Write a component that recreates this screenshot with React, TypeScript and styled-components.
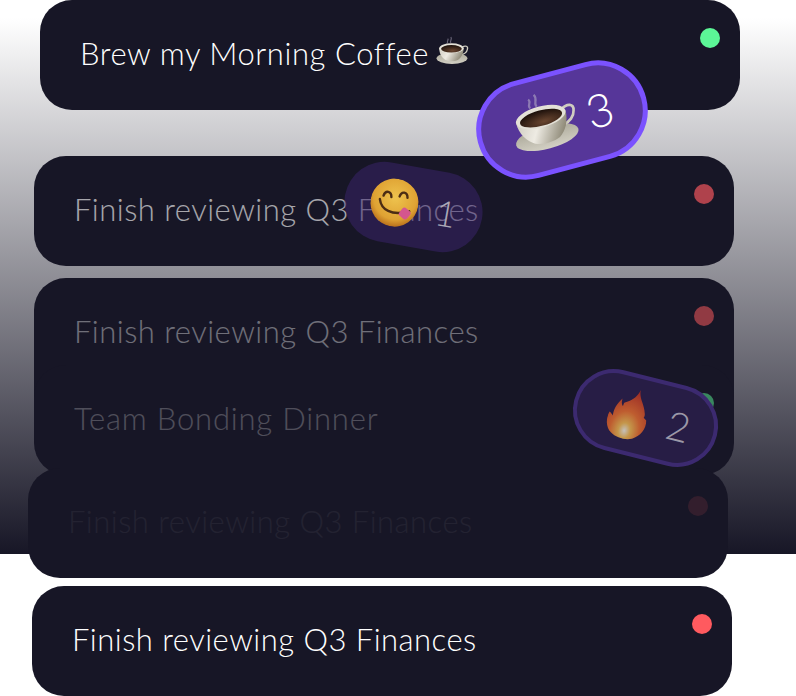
import React from "react";
import styled, { createGlobalStyle } from "styled-components";

const GlobalStyle = createGlobalStyle`
  html, body {
    margin: 0;
    padding: 0;
    background: #fff;
  }
`;

const Page = styled.div`
  width: 796px;
  height: 696px;
  overflow: hidden;
  position: relative;
  font-family: "Lato", "Open Sans", sans-serif;
  background: linear-gradient(180deg, #fff 18px, #171626 554px) no-repeat;
  background-size: 100% 554px;
`;

const Card = styled.div<{ $left: number; $top: number; $height: number }>`
  position: relative;
  box-sizing: border-box;
  width: 700px;
  height: ${(p) => p.$height}px;
  margin-left: ${(p) => p.$left}px;
  margin-top: ${(p) => p.$top}px;
  padding: 0 20px 0 40px;
  display: flex;
  justify-content: space-between;
  align-items: flex-start;
  background: #171626;
  border-radius: 32px;
`;

const Title = styled.div<{ $fade: number; $spread: number }>`
  box-sizing: border-box;
  height: 110px;
  padding-bottom: 5px;
  display: flex;
  align-items: center;
  gap: 7px;
  color: #fff;
  opacity: ${(p) => p.$fade};
  font-size: 31px;
  font-weight: 300;
  letter-spacing: ${(p) => p.$spread}px;
  white-space: nowrap;
`;

const Dot = styled.span<{ $color: string; $fade: number }>`
  width: 20px;
  height: 20px;
  margin-top: 28px;
  border-radius: 50%;
  background: ${(p) => p.$color};
  opacity: ${(p) => p.$fade};
`;

const Badge = styled.div<{
  $x: number;
  $y: number;
  $w: number;
  $h: number;
  $angle: number;
  $bg: string;
  $border: string;
  $stroke: number;
  $gap: number;
  $indent?: number;
}>`
  position: absolute;
  z-index: 5;
  left: ${(p) => p.$x - p.$w / 2}px;
  top: ${(p) => p.$y - p.$h / 2}px;
  box-sizing: border-box;
  width: ${(p) => p.$w}px;
  height: ${(p) => p.$h}px;
  padding-left: ${(p) => p.$indent ?? 0}px;
  display: flex;
  align-items: center;
  justify-content: center;
  gap: ${(p) => p.$gap}px;
  background: ${(p) => p.$bg};
  border: ${(p) => p.$stroke}px solid ${(p) => p.$border};
  border-radius: 999px;
  transform: rotate(${(p) => p.$angle}deg);
`;

const Count = styled.span<{ $size: number; $color: string }>`
  color: ${(p) => p.$color};
  font-size: ${(p) => p.$size}px;
  font-weight: 300;
  line-height: 1;
`;

const Emoji = styled.svg<{ $fade?: number; $lift?: number }>`
  display: block;
  flex: none;
  opacity: ${(p) => p.$fade ?? 1};
  margin-bottom: ${(p) => p.$lift ?? 0}px;
`;

const Coffee = ({ size, lift }: { size: number; lift: number }) => (
  <Emoji width={size} height={size * 0.87} viewBox="0 0 62 54" $lift={lift}>
    <defs>
      <linearGradient id="cupBody" x1="0" y1="0" x2="1" y2="0.3">
        <stop offset="0" stopColor="#cfccc1" />
        <stop offset="0.45" stopColor="#eeebe3" />
        <stop offset="1" stopColor="#8f8a78" />
      </linearGradient>
      <linearGradient id="saucer" x1="0" y1="0" x2="0" y2="1">
        <stop offset="0" stopColor="#a9a697" />
        <stop offset="1" stopColor="#d3d0c4" />
      </linearGradient>
      <radialGradient id="brew" cx="0.55" cy="0.75" r="0.7">
        <stop offset="0" stopColor="#6a4630" />
        <stop offset="1" stopColor="#1f120c" />
      </radialGradient>
    </defs>
    <ellipse cx="30" cy="42" rx="29" ry="10.5" fill="url(#saucer)" />
    <path d="M49 21c6-4 12-2 10 4-1 5-6 9-12 10" fill="none" stroke="#cfccc0" strokeWidth="2.4" />
    <path d="M6 23c0 10 5 18 12 22 7 3 16 3 23 0 6-4 11-12 11-22H6z" fill="url(#cupBody)" />
    <ellipse cx="29" cy="23" rx="23" ry="9.5" fill="#e4e1d7" />
    <ellipse cx="29" cy="24" rx="19.5" ry="7" fill="url(#brew)" />
    <path d="M22 13c-3-3 3-5 0-8M28 13c-3-3 3-6 0-11" fill="none" stroke="#b9b3c9" strokeOpacity="0.55" strokeWidth="2" />
  </Emoji>
);

const Yum = ({ size }: { size: number }) => (
  <Emoji width={size} height={size} viewBox="0 0 48 48" $lift={2}>
    <defs>
      <radialGradient id="yumFace" cx="0.5" cy="0.4" r="0.6">
        <stop offset="0" stopColor="#eec34e" />
        <stop offset="0.75" stopColor="#dfa233" />
        <stop offset="1" stopColor="#b9701c" />
      </radialGradient>
    </defs>
    <circle cx="24" cy="24" r="24" fill="url(#yumFace)" />
    <path d="M12 19c1-6 7-6 8 0M28 17c1-6 7-6 8 0" fill="none" stroke="#4c2d14" strokeWidth="2.4" strokeLinecap="round" />
    <path d="M9 23c3 10 14 15 31 7" fill="none" stroke="#4c2d14" strokeWidth="2.4" strokeLinecap="round" />
    <rect x="31" y="28" width="10" height="10" rx="3" transform="rotate(30 36 33)" fill="#d4568f" />
  </Emoji>
);

const Flame = ({ size }: { size: number }) => (
  <Emoji width={size} height={size * 1.25} viewBox="0 0 40 50" $fade={0.78}>
    <defs>
      <radialGradient id="flameFill" cx="0.5" cy="0.84" r="0.85">
        <stop offset="0" stopColor="#f2eedc" />
        <stop offset="0.18" stopColor="#f0b94c" />
        <stop offset="0.45" stopColor="#e96f2a" />
        <stop offset="1" stopColor="#b92a1c" />
      </radialGradient>
    </defs>
    <path
      d="M25 0c0 7 5 11 8 18 1 3 2 4 1 7l3 2c2 8-2 16-9 20-6 3-15 3-21-1C1 42-1 34 1 27c2 1 3 2 4 3-1-6 1-12 5-18 0 3 0 5 2 7 1-2-1-3 3-5 5-3 9-8 10-14z"
      fill="url(#flameFill)"
    />
  </Emoji>
);

const rows = [
  { left: 40, top: 0, height: 110, fade: 1, spread: 0.57, dot: "#5cf797", dotFade: 1, text: "Brew my Morning Coffee", cup: true },
  { left: 34, top: 46, height: 110, fade: 0.62, spread: 0.48, dot: "#ff5a5f", dotFade: 0.66, text: "Finish reviewing Q3 Finances" },
  { left: 34, top: 12, height: 162, fade: 0.38, spread: 0.48, dot: "#ff5a5f", dotFade: 0.53, text: "Finish reviewing Q3 Finances" },
  { left: 34, top: -75, height: 110, fade: 0.24, spread: 0.82, dot: "#5cf797", dotFade: 0.5, text: "Team Bonding Dinner" },
  { left: 28, top: -7, height: 110, fade: 0.05, spread: 0.48, dot: "#ff5a5f", dotFade: 0.12, text: "Finish reviewing Q3 Finances" },
  { left: 32, top: 8, height: 110, fade: 1, spread: 0.48, dot: "#ff5a5f", dotFade: 1, text: "Finish reviewing Q3 Finances" },
];

export default function App() {
  return (
    <Page>
      <GlobalStyle />
      {rows.map((row, i) => (
        <Card key={i} $left={row.left} $top={row.top} $height={row.height}>
          <Title $fade={row.fade} $spread={row.spread}>
            {row.text}
            {row.cup && <Coffee size={33} lift={4} />}
          </Title>
          <Dot $color={row.dot} $fade={row.dotFade} />
        </Card>
      ))}
      <Badge $x={562} $y={120} $w={174} $h={100} $angle={-15} $bg="#563699" $border="#7b52ff" $stroke={5} $gap={9}>
        <Coffee size={69} lift={8} />
        <Count $size={46} $color="#fff">3</Count>
      </Badge>
      <Badge $x={413} $y={207} $w={139} $h={80} $angle={10} $bg="rgba(60, 35, 110, 0.5)" $border="transparent" $stroke={0} $gap={18}>
        <Yum size={48} />
        <Count $size={36} $color="#aaa7b6">1</Count>
      </Badge>
      <Badge $x={645} $y={418} $w={147} $h={82} $angle={14} $bg="#271d45" $border="#3c2a70" $stroke={4} $gap={18} $indent={8}>
        <Flame size={42} />
        <Count $size={40} $color="#9b98a8">2</Count>
      </Badge>
    </Page>
  );
}
